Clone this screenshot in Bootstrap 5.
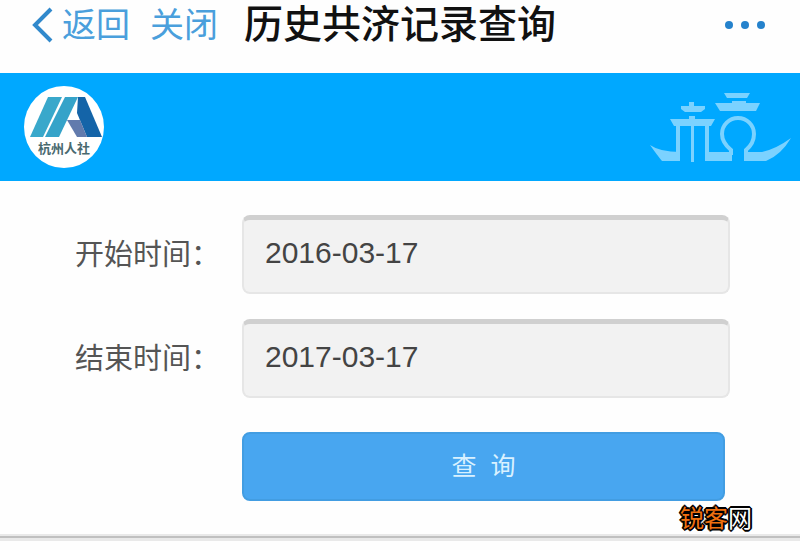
<!DOCTYPE html>
<html lang="zh-CN">
<head>
    <meta charset="UTF-8">
    <meta name="viewport" content="width=device-width, initial-scale=1.0">
    <title>历史共济记录查询</title>
    <link rel="stylesheet" href="https://cdn.jsdelivr.net/npm/bootstrap@5.3.0/dist/css/bootstrap.min.css">
    <style>
        body {
            font-family: "Liberation Sans", "Noto Sans CJK SC", sans-serif;
            background: #fefefe;
        }
        .top-bar {
            height: 73px;
            padding: 0 34px 24px 32px;
        }
        .top-links {
            gap: 20px;
            margin-right: 26px;
        }
        .top-link {
            color: #4a9fdc;
            font-size: 34px;
            line-height: 48px;
        }
        .top-title {
            color: #111;
            font-size: 39px;
            font-weight: 500;
            line-height: 48px;
        }
        .banner {
            height: 108px;
            padding: 0 8px 0 24px;
            background: #00a8ff;
        }
        .query-form {
            padding: 34px 70px 33px 75px;
        }
        .form-line {
            margin-bottom: 25px;
        }
        .line-label {
            width: 167px;
            color: #555;
            font-size: 29px;
            line-height: 40px;
        }
        .date-input {
            height: 79px;
            padding: 0 20px 6px 21px;
            color: #444;
            font-size: 30px;
            background: #f2f2f2;
            border: 2px solid #e6e6e6;
            border-top: 5px solid #d0d0d0;
            border-radius: 8px;
        }
        .date-input:focus {
            background: #f2f2f2;
        }
        .query-btn {
            height: 69px;
            margin: 9px 5px 0 167px;
            color: #d9f1ff;
            font-size: 25px;
            background: #48a6f0;
            border: 2px solid #429de2;
            border-radius: 8px;
        }
        .query-btn:hover {
            color: #fff;
            background: #3a98e2;
        }
        .bottom-line {
            height: 7px;
            background: #c0c0c0;
            border-top: 2px solid #e9e9e9;
            border-bottom: 3px solid #e9e9e9;
        }
        /* site mark laid over the lower right corner of the form */
        .site-mark {
            right: 48px;
            bottom: 0;
            color: #fff;
            font-size: 24px;
            line-height: 30px;
            text-shadow: -2px 0 #000, 2px 0 #000, 0 -2px #000, 0 2px #000,
                -1px -1px #000, 1px -1px #000, -1px 1px #000, 1px 1px #000;
        }
        .site-mark span {
            color: #f07010;
        }
    </style>
</head>
<body>
    <!-- Title bar -->
    <header class="top-bar d-flex align-items-center">
        <nav class="top-links d-flex align-items-center">
            <a href="#" class="top-link d-flex align-items-center text-decoration-none">
                <svg class="me-2" width="22" height="36" viewBox="0 0 22 36" fill="none" stroke="#3189cc" stroke-width="4" aria-hidden="true">
                    <path d="M19 2L3 18L19 34"/>
                </svg>返回</a>
            <a href="#" class="top-link text-decoration-none">关闭</a>
        </nav>
        <h1 class="top-title mb-0">历史共济记录查询</h1>
        <button type="button" class="btn p-0 border-0 d-flex ms-auto" aria-label="更多">
            <svg width="42" height="10" viewBox="0 0 42 10" fill="#2582cc">
                <circle cx="5" cy="5" r="4"/>
                <circle cx="21" cy="5" r="4"/>
                <circle cx="37" cy="5" r="4"/>
            </svg>
        </button>
    </header>

    <!-- Banner -->
    <div class="banner d-flex align-items-center justify-content-between">
        <svg width="80" height="82" viewBox="0 0 80 82" role="img" aria-label="杭州人社">
            <ellipse cx="40" cy="41" rx="40" ry="41" fill="#fff"/>
            <path d="M24 11H38L19 51H6Z" fill="#39a8cb"/>
            <path d="M41 11H54L35 51H21Z" fill="#35a3c9"/>
            <path d="M54 11H61L78 51H63L53 27Z" fill="#1464a8"/>
            <path d="M43 34H56L63 51H53Z" fill="#627bad"/>
            <text x="40" y="67" text-anchor="middle" font-family="Noto Sans CJK SC, sans-serif" font-size="13" font-weight="700" fill="#49696f">杭州人社</text>
        </svg>
        <svg width="142" height="72" viewBox="0 0 142 72" fill="#7bd2ff" aria-hidden="true">
            <!-- left pavilion -->
            <path d="M31 15H39V11H44V15H55V18L51 21H35L31 18Z"/>
            <path d="M20 28H39V25H45V28H65L61 35H24Z"/>
            <path d="M26 35H30V62H26ZM41 35H44V71H41ZM55 35H59V62H55Z"/>
            <!-- right pavilion -->
            <path d="M74 2H100L97 7H77Z"/>
            <path d="M82 10H96V12H110L106 20H70L65 12H82Z"/>
            <path d="M81 64V59C75 54 72 48 72 43A16 16 0 0 1 104 43C104 48 102 54 96 59V64" fill="none" stroke="#7bd2ff" stroke-width="4"/>
            <!-- boat shaped base -->
            <path d="M0 54Q10 61 30 61V70H12Q7 64 0 54Z"/>
            <path d="M55 61H82V70H55Z"/>
            <path d="M94 61H112Q126 58 141 47Q131 64 116 70H94Z"/>
        </svg>
    </div>

    <!-- Query form -->
    <main class="position-relative">
        <form class="query-form">
            <div class="form-line d-flex align-items-center">
                <label for="startDate" class="line-label flex-shrink-0">开始时间：</label>
                <input type="text" class="form-control date-input" id="startDate" name="startDate" value="2016-03-17">
            </div>
            <div class="form-line d-flex align-items-center">
                <label for="endDate" class="line-label flex-shrink-0">结束时间：</label>
                <input type="text" class="form-control date-input" id="endDate" name="endDate" value="2017-03-17">
            </div>
            <div class="d-grid">
                <button type="button" class="btn query-btn">查&nbsp;&nbsp;询</button>
            </div>
        </form>
        <div class="site-mark position-absolute"><span>锐客</span>网</div>
    </main>
    <div class="bottom-line"></div>

    <script src="https://cdn.jsdelivr.net/npm/bootstrap@5.3.0/dist/js/bootstrap.bundle.min.js"></script>
</body>
</html>
